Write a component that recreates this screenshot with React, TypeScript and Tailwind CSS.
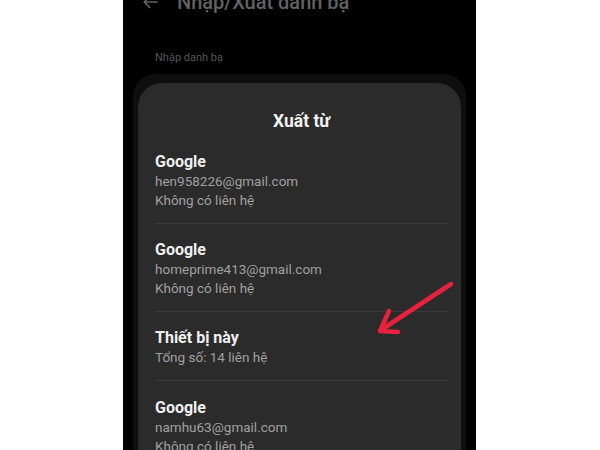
import React from 'react';

type Account = {
  name: string;
  lines: string[];
};

const accounts: Account[] = [
  { name: 'Google', lines: ['hen958226@gmail.com', 'Không có liên hệ'] },
  { name: 'Google', lines: ['homeprime413@gmail.com', 'Không có liên hệ'] },
  { name: 'Thiết bị này', lines: ['Tổng số: 14 liên hệ'] },
  { name: 'Google', lines: ['namhu63@gmail.com', 'Không có liên hệ'] },
];

const font = { fontFamily: "Roboto, 'Noto Sans', sans-serif" };

export default function App() {
  return (
    <div className="relative w-[600px] h-[450px] overflow-hidden bg-white" style={font}>
      <div className="ml-[123px] w-[353px] h-[450px] bg-black overflow-hidden">
        {/* top bar, cut off by the crop */}
        <div className="mt-[-13px] h-[30px] flex items-center text-[#626262]">
          <svg className="ml-[18px] w-[20px] h-[20px]" viewBox="0 0 24 24" fill="none" stroke="currentColor" strokeWidth="2">
            <path d="M20 12H5M11 5l-7 7 7 7" />
          </svg>
          <span className="ml-[16px] text-[20px] font-medium">Nhập/Xuất danh bạ</span>
        </div>

        <div className="mt-[34px] ml-[32px] text-[11px] text-[#555555] leading-[14px]">Nhập danh bạ</div>

        <div className="mt-[9px] mx-[10px] rounded-t-[22px] bg-[#0e0e0e] pt-[9px] px-[5px]">
          <div className="rounded-t-[24px] bg-[#2b2b2b] pl-[17px] pr-[13px] h-[400px]">
            <div className="pt-[26px] pb-[3px] text-center text-[17.5px] leading-[24px] font-bold text-[#f2f2f2]">
              Xuất từ
            </div>
            {accounts.map((a, i) => (
              <div key={i}>
                {i > 0 && <div className="h-px bg-[#3a3a3a]" />}
                <div className={i === 3 ? 'pt-[17px] pb-[13px]' : 'pt-[16px] pb-[13px]'}>
                  <div className="text-[16px] leading-[20px] font-bold text-[#efefef]">{a.name}</div>
                  {a.lines.map((l, j) => (
                    <div key={j} className="text-[13.5px] leading-[19px] text-[#a0a0a0]">{l}</div>
                  ))}
                </div>
              </div>
            ))}
          </div>
        </div>
      </div>

      {/* red pointer arrow */}
      <svg className="absolute left-0 top-0 w-[600px] h-[450px] pointer-events-none" viewBox="0 0 600 450" fill="none">
        <g stroke="#e8213f" strokeWidth="4.5" strokeLinecap="round" strokeLinejoin="round">
          <path d="M451 284 L381 330" />
          <path d="M389 311 L380 331 L398 332" />
        </g>
      </svg>
    </div>
  );
}
